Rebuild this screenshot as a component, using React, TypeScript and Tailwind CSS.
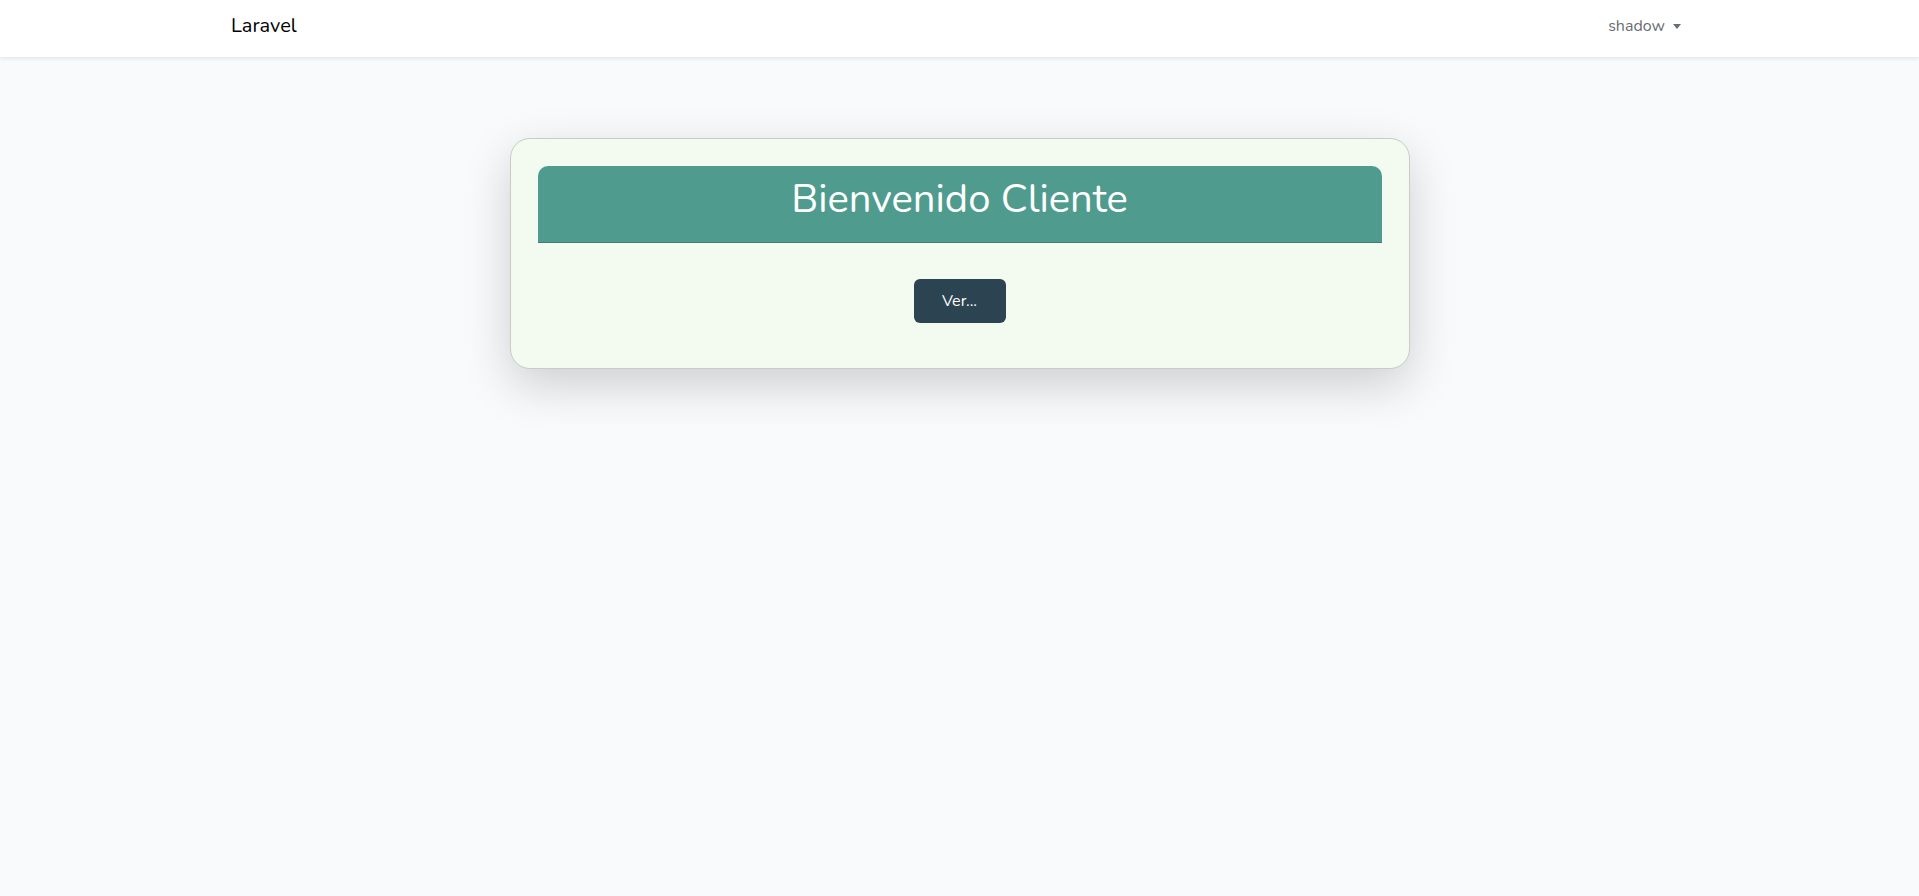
import React from 'react'

const font = { fontFamily: 'Nunito, Lato, "Open Sans", sans-serif' }

export default function App() {
  return (
    <div className="min-h-screen bg-[#f8fafc]" style={font}>
      {/* Navbar */}
      <nav className="h-[57px] bg-white shadow-[0_2px_4px_rgba(0,0,0,0.08)]">
        <div className="mx-auto flex h-full w-[1457px] items-center justify-between pr-[7px] pb-[5px]">
          <a className="text-[20px] leading-none text-black">Laravel</a>
          <button className="flex items-center gap-[8px] text-[16px] text-[#6a6e72]">
            shadow
            <span className="mt-[1px] h-0 w-0 border-x-[4px] border-t-[5px] border-x-transparent border-t-[#6a6e72]" />
          </button>
        </div>
      </nav>

      {/* Content */}
      <main className="flex justify-center pt-[81px]">
        <div className="w-[900px] rounded-[20px] border border-[#c5cdc5] bg-[#f3faf0] px-[27px] pt-[27px] pb-[45px] shadow-[0_16px_48px_rgba(0,0,0,0.175)]">
          <div className="flex h-[77px] items-start justify-center rounded-t-[10px] border-b border-[#3e7f73] bg-[#4f9b8e] pt-[9px]">
            <h1 className="text-[40px] leading-[1.2] text-white">Bienvenido Cliente</h1>
          </div>
          <div className="flex justify-center pt-[36px]">
            <button className="h-[44px] w-[92px] rounded-[6px] bg-[#2c4452] text-[16px] text-white">
              Ver...
            </button>
          </div>
        </div>
      </main>
    </div>
  )
}
